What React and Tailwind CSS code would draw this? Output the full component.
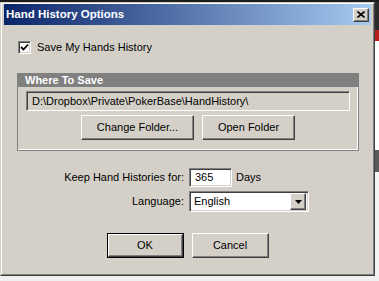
const raised =
  "border border-t-white border-l-white border-r-[#404040] border-b-[#404040] shadow-[inset_-1px_-1px_0_#808080] bg-[#d4d0c8]";
const sunken =
  "border border-t-[#808080] border-l-[#808080] border-r-white border-b-white shadow-[inset_1px_1px_0_#404040,inset_-1px_-1px_0_#d4d0c8]";

const Button = ({ children, width, isDefault }) => {
  if (isDefault) {
    return (
      <div className={`${width} h-[25px] border border-black`}>
        <div className={`${raised} w-full h-full flex items-center justify-center text-[11px] text-black`}>
          {children}
        </div>
      </div>
    );
  }
  return (
    <div className={`${raised} ${width} h-[25px] flex items-center justify-center text-[11px] text-black`}>
      {children}
    </div>
  );
};

const App = () => {
  return (
    <div
      className="w-[379px] h-[281px] overflow-hidden flex flex-col bg-[#f2f2f2]"
      style={{ fontFamily: '"Liberation Sans", Arial, sans-serif' }}
    >
      <div className="h-[2px] bg-[#1c1c1c]" />
      <div className="flex">
        {/* dialog window */}
        <div className="w-[375px] h-[274px] border border-t-[#d4d0c8] border-l-[#d4d0c8] border-r-[#404040] border-b-[#404040]">
          <div className="w-full h-full border border-t-white border-l-white border-r-[#808080] border-b-[#808080] bg-[#d4d0c8] px-[2px] pb-[2px] flex flex-col">
            {/* title bar */}
            <div className="h-[21px] flex items-center justify-between pl-[2px] pr-[2px] bg-[linear-gradient(to_right,#0a246a,#a6caf0)]">
              <span className="text-white font-bold text-[11.5px] leading-none">Hand History Options</span>
              <div className={`${raised} w-[16px] h-[14px] flex items-center justify-center`}>
                <svg width="8" height="7" viewBox="0 0 8 7">
                  <path d="M0.5 0.5 L7.5 6.5 M7.5 0.5 L0.5 6.5" stroke="#000" strokeWidth="1.6" />
                </svg>
              </div>
            </div>

            {/* body */}
            <div className="flex-1 flex flex-col">
              <div className="flex items-center gap-[6px] mt-[16px] ml-[14px] h-[13px]">
                <div className={`${sunken} w-[13px] h-[13px] bg-white flex items-center justify-center`}>
                  <svg width="9" height="9" viewBox="0 0 9 9">
                    <path d="M1 4 L3.5 6.5 L8 1.5" stroke="#000" strokeWidth="1.8" fill="none" />
                  </svg>
                </div>
                <span className="text-[11px] text-black leading-none">Save My Hands History</span>
              </div>

              {/* where to save group */}
              <div className="mt-[19px] ml-[13px] w-[342px] border border-[#808080] shadow-[inset_-1px_-1px_0_#ffffff] pb-[10px]">
                <div className="h-[13px] bg-[#808080] flex items-center pl-[7px]">
                  <span className="text-white font-bold text-[11px] leading-none">Where To Save</span>
                </div>
                <div className={`${sunken} mt-[4px] mx-[8px] h-[20px] flex items-center pl-[5px]`}>
                  <span className="text-[11px] text-black leading-none">D:\Dropbox\Private\PokerBase\HandHistory\</span>
                </div>
                <div className="flex justify-center gap-[8px] mt-[4px]">
                  <Button width="w-[113px]">Change Folder...</Button>
                  <Button width="w-[93px]">Open Folder</Button>
                </div>
              </div>

              {/* options */}
              <div className="mt-[17px] grid grid-cols-[180px_auto] gap-x-[5px] gap-y-[4px]">
                <div className="h-[19px] flex items-center justify-end text-[11px] text-black">Keep Hand Histories for:</div>
                <div className="flex items-center gap-[4px]">
                  <div className={`${sunken} w-[43px] h-[19px] bg-white flex items-center pl-[5px] text-[11px] text-black`}>365</div>
                  <span className="text-[11px] text-black">Days</span>
                </div>
                <div className="h-[21px] flex items-center justify-end text-[11px] text-black">Language:</div>
                <div className={`${sunken} w-[120px] h-[21px] bg-white flex items-center justify-between pl-[4px] pr-[2px]`}>
                  <span className="text-[11px] text-black">English</span>
                  <div className={`${raised} w-[16px] h-[17px] flex items-center justify-center`}>
                    <svg width="7" height="4" viewBox="0 0 7 4">
                      <path d="M0 0 H7 L3.5 4 Z" fill="#000" />
                    </svg>
                  </div>
                </div>
              </div>

              <div className="flex justify-center gap-[8px] mt-[21px]">
                <Button width="w-[77px]" isDefault>OK</Button>
                <Button width="w-[77px]">Cancel</Button>
              </div>
            </div>
          </div>
        </div>

        {/* edge of whatever is behind */}
        <div className="flex-1 flex flex-col">
          <div className="h-[28px] bg-[#2a2a2a]" />
          <div className="h-[11px] bg-[#b8201c]" />
          <div className="h-[109px] bg-white" />
          <div className="h-[22px] bg-[#5a5a5a]" />
          <div className="flex-1 bg-[#f4f4f4]" />
        </div>
      </div>
      <div className="flex-1 bg-[#f0f0f0]" />
    </div>
  );
};

export default App;
